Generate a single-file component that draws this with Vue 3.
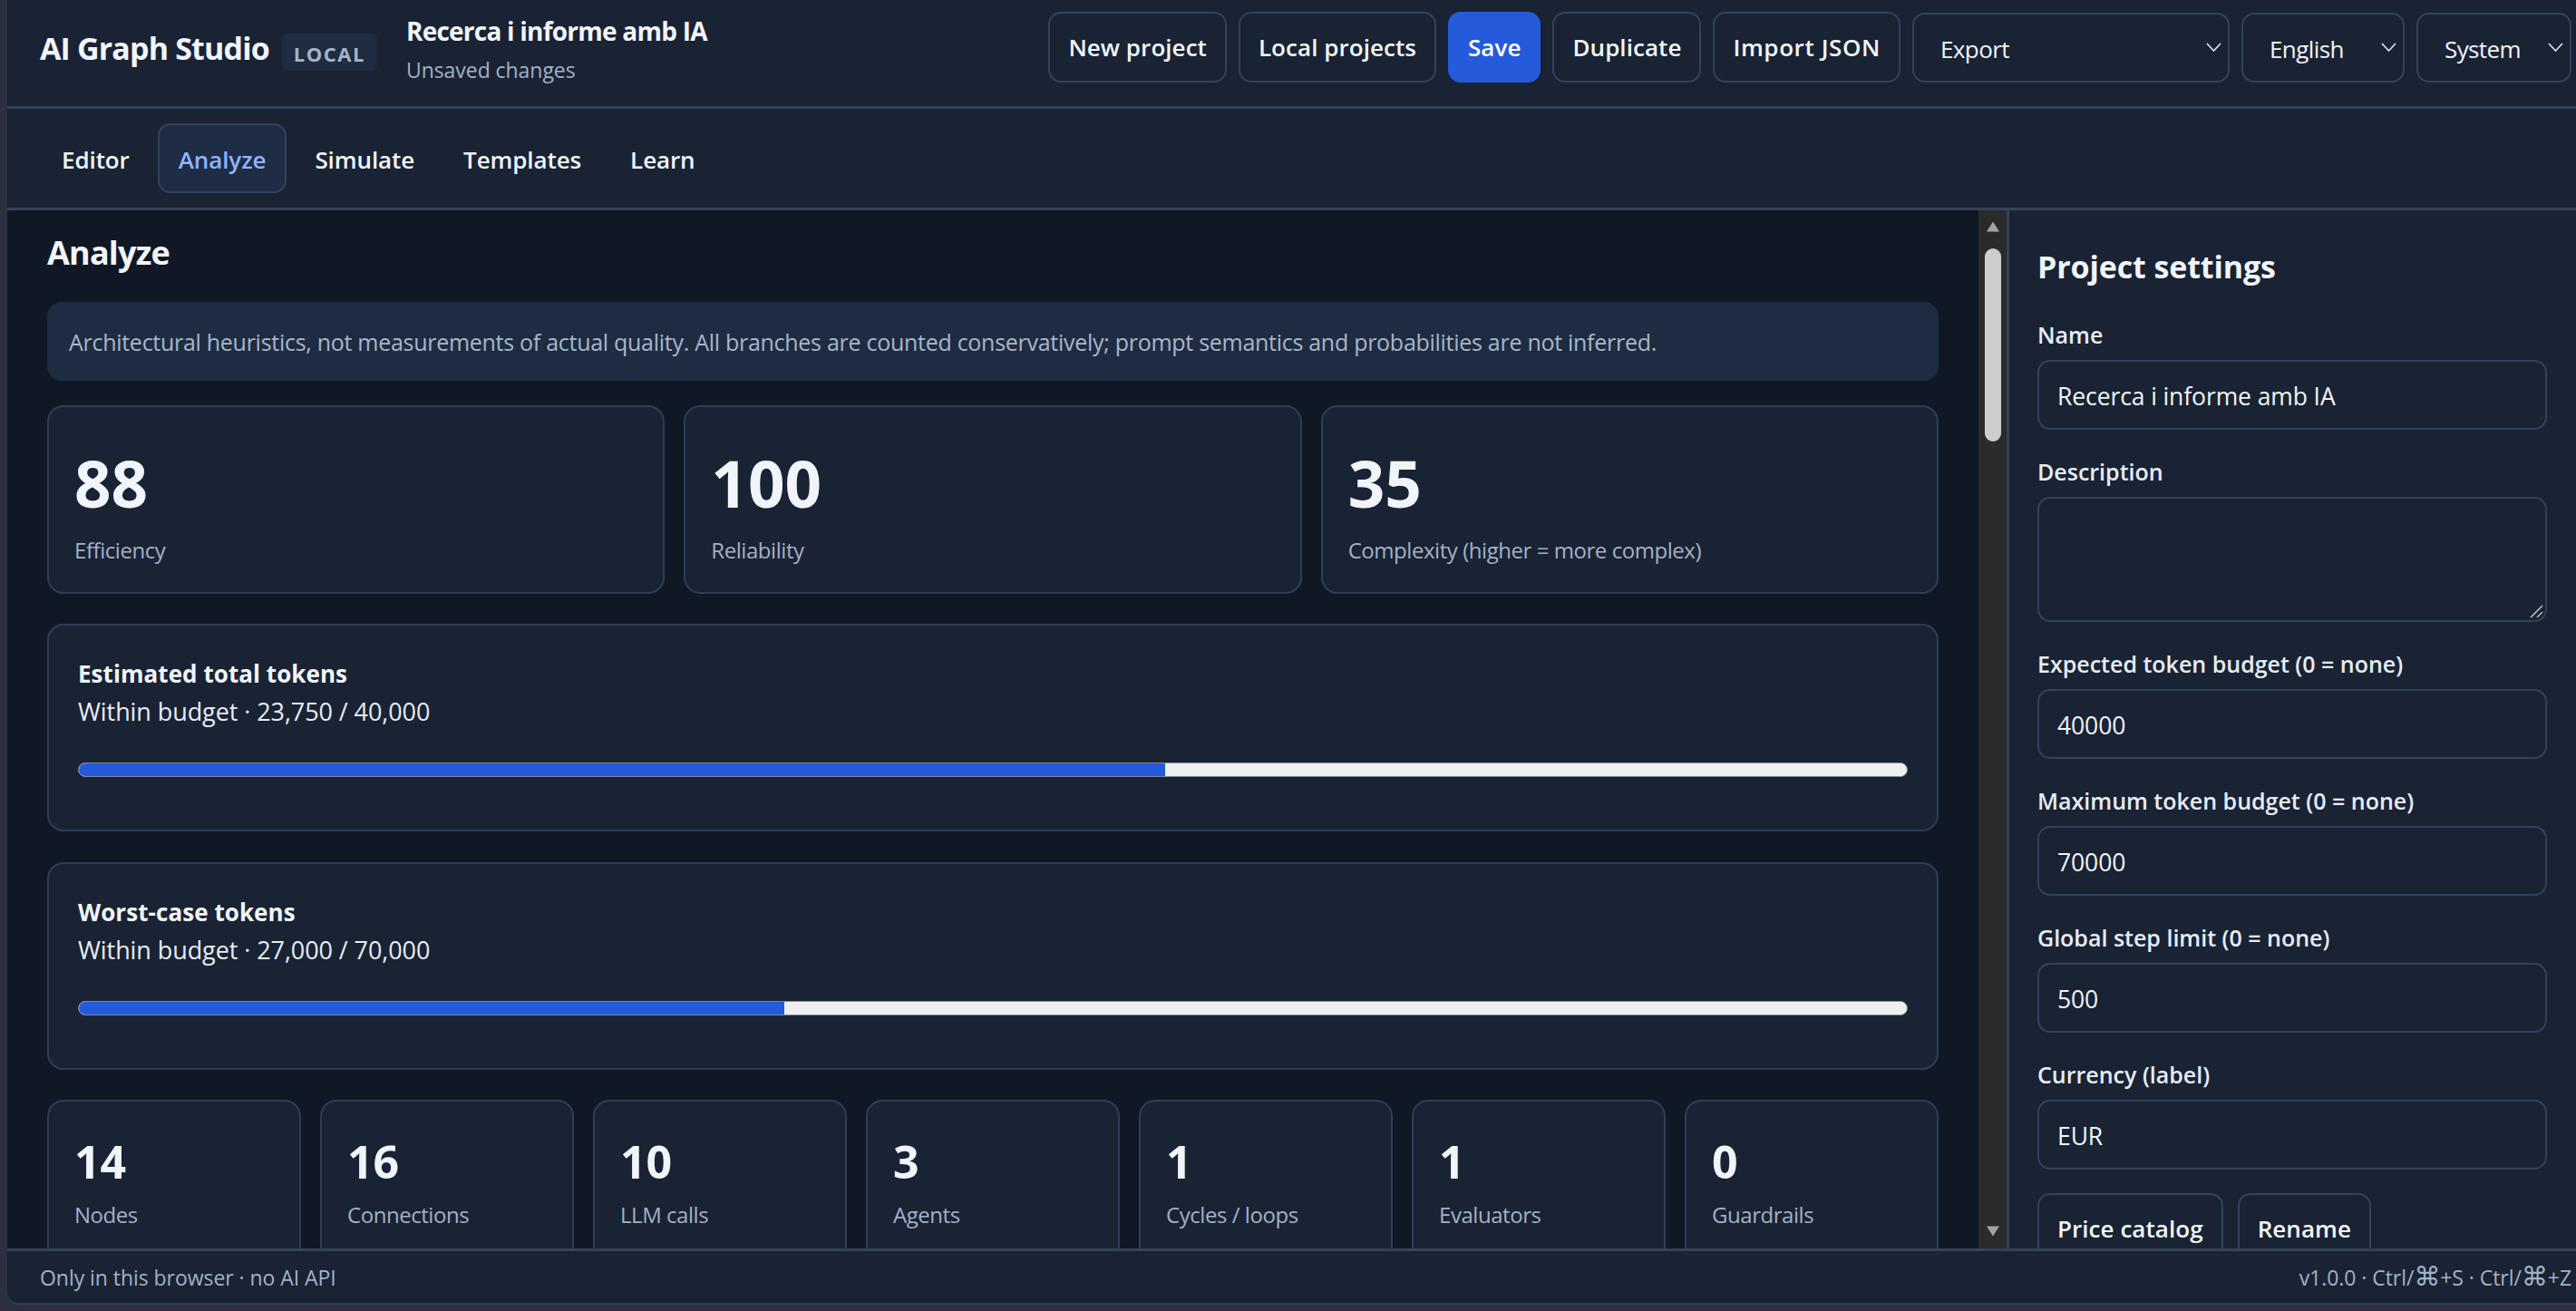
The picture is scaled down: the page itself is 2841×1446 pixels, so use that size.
<script setup>
const topActions = ['New project', 'Local projects', 'Save', 'Duplicate', 'Import JSON']
const topSelects = [
  { label: 'Export', cls: 'sel-export' },
  { label: 'English', cls: 'sel-lang' },
  { label: 'System', cls: 'sel-theme' },
]
const tabs = ['Editor', 'Analyze', 'Simulate', 'Templates', 'Learn']

const scores = [
  { value: '88', label: 'Efficiency' },
  { value: '100', label: 'Reliability' },
  { value: '35', label: 'Complexity (higher = more complex)' },
]
const budgets = [
  { title: 'Estimated total tokens', text: 'Within budget · 23,750 / 40,000', pct: 59.4 },
  { title: 'Worst-case tokens', text: 'Within budget · 27,000 / 70,000', pct: 38.6 },
]
const counts = [
  { value: '14', label: 'Nodes' },
  { value: '16', label: 'Connections' },
  { value: '10', label: 'LLM calls' },
  { value: '3', label: 'Agents' },
  { value: '1', label: 'Cycles / loops' },
  { value: '1', label: 'Evaluators' },
  { value: '0', label: 'Guardrails' },
]
const fields = [
  { label: 'Expected token budget (0 = none)', value: '40000' },
  { label: 'Maximum token budget (0 = none)', value: '70000' },
  { label: 'Global step limit (0 = none)', value: '500' },
  { label: 'Currency (label)', value: 'EUR' },
]
</script>

<template>
  <div class="shell">
    <div class="app">
      <header class="topbar">
        <div class="brand">AI Graph Studio</div>
        <span class="badge">LOCAL</span>
        <div class="project">
          <div class="project-name">Recerca i informe amb IA</div>
          <div class="project-state">Unsaved changes</div>
        </div>
        <div class="actions">
          <button
            v-for="a in topActions"
            :key="a"
            class="btn"
            :class="{ primary: a === 'Save', wide: a === 'Import JSON' }"
          >{{ a }}</button>
          <div v-for="s in topSelects" :key="s.label" class="select" :class="s.cls">
            <span>{{ s.label }}</span>
            <svg width="17" height="10" viewBox="0 0 17 10" fill="none">
              <path d="M1 1l7.5 8L16 1" stroke="#e2e8f0" stroke-width="1.6" />
            </svg>
          </div>
        </div>
      </header>

      <nav class="tabs">
        <button v-for="t in tabs" :key="t" class="tab" :class="{ active: t === 'Analyze' }">{{ t }}</button>
      </nav>

      <div class="body">
        <main class="main">
          <h2 class="title">Analyze</h2>
          <div class="notice">Architectural heuristics, not measurements of actual quality. All branches are counted conservatively; prompt semantics and probabilities are not inferred.</div>

          <div class="scores">
            <div v-for="s in scores" :key="s.label" class="card score">
              <div class="score-value">{{ s.value }}</div>
              <div class="card-label">{{ s.label }}</div>
            </div>
          </div>

          <div v-for="b in budgets" :key="b.title" class="card budget">
            <div class="budget-title">{{ b.title }}</div>
            <div class="budget-text">{{ b.text }}</div>
            <div class="bar">
              <div class="bar-fill" :style="{ width: b.pct + '%' }"></div>
            </div>
          </div>

          <div class="counts">
            <div v-for="c in counts" :key="c.label" class="card count">
              <div class="count-value">{{ c.value }}</div>
              <div class="card-label">{{ c.label }}</div>
            </div>
          </div>
        </main>

        <div class="scrollbar">
          <svg width="16" height="12" viewBox="0 0 16 12"><path d="M8 0.5l7 11H1z" fill="#a3a3a3" /></svg>
          <div class="thumb"></div>
          <div class="spacer"></div>
          <svg width="16" height="12" viewBox="0 0 16 12"><path d="M8 11.5l7-11H1z" fill="#a3a3a3" /></svg>
        </div>

        <aside class="side">
          <h3 class="side-title">Project settings</h3>
          <label class="field-label">Name</label>
          <div class="input">Recerca i informe amb IA</div>
          <label class="field-label">Description</label>
          <div class="input textarea">
            <svg class="grip" width="16" height="16" viewBox="0 0 16 16" fill="none">
              <path d="M2 15L15 2M9 15l6-6" stroke="#b8b8b8" stroke-width="1.6" />
            </svg>
          </div>
          <template v-for="f in fields" :key="f.label">
            <label class="field-label">{{ f.label }}</label>
            <div class="input">{{ f.value }}</div>
          </template>
          <div class="side-actions">
            <button class="btn">Price catalog</button>
            <button class="btn">Rename</button>
          </div>
        </aside>
      </div>

      <footer class="status">
        <span>Only in this browser · no AI API</span>
        <span>v1.0.0 · Ctrl/<span class="cmd">⌘</span>+S · Ctrl/<span class="cmd">⌘</span>+Z</span>
      </footer>
    </div>
  </div>
</template>

<style scoped>
.shell {
  width: 2841px;
  height: 1446px;
  box-sizing: border-box;
  padding: 0 0 6px 8px;
  background: #2c2f40;
  overflow: hidden;
  font-family: "Open Sans", "Noto Sans", "DejaVu Sans", sans-serif;
  color: #f1f5f9;
}
.app {
  height: 100%;
  box-sizing: border-box;
  display: flex;
  flex-direction: column;
  background: #192334;
  border-bottom: 3px solid #2d394e;
  border-bottom-left-radius: 14px;
  overflow: hidden;
}

.topbar {
  flex: none;
  height: 120px;
  box-sizing: border-box;
  display: flex;
  align-items: center;
  padding: 0 5px 0 36px;
  border-bottom: 3px solid #33425c;
}
.brand {
  font-size: 34px;
  font-weight: 700;
  letter-spacing: -0.85px;
  margin-top: -11px;
}
.badge {
  margin-left: 14px;
  padding: 0 13px;
  height: 41px;
  line-height: 44px;
  margin-top: -2px;
  font-size: 22px;
  font-weight: 700;
  letter-spacing: 1.5px;
  color: #a6b4c8;
  background: #1f2c42;
  border-radius: 6px;
}
.project {
  margin-left: 32px;
  margin-top: -10px;
}
.project-name {
  font-size: 28px;
  font-weight: 700;
  letter-spacing: -0.77px;
  line-height: 36px;
}
.project-state {
  font-size: 23px;
  line-height: 30px;
  margin-top: 10px;
  letter-spacing: -0.05px;
  color: #a3b1c6;
}
.actions {
  margin-left: auto;
  display: flex;
  align-items: flex-start;
  gap: 13px;
  margin-top: -13px;
}
.btn {
  height: 78px;
  box-sizing: border-box;
  padding: 0 20px;
  background: transparent;
  border: 2px solid #33425c;
  border-radius: 14px;
  color: #f1f5f9;
  font-family: inherit;
  font-size: 26px;
  font-weight: 600;
  letter-spacing: 0.05px;
}
.btn.wide {
  letter-spacing: 0.6px;
}
.btn.primary {
  background: #255bdb;
  border-color: #255bdb;
  color: #fff;
}
.select {
  height: 77px;
  box-sizing: border-box;
  margin-top: 1px;
  display: flex;
  align-items: center;
  justify-content: space-between;
  padding: 0 7px 2px 29px;
  border: 2px solid #33425c;
  border-radius: 14px;
  font-size: 26px;
  letter-spacing: -0.6px;
}
.select span {
  margin-top: 5px;
}
.sel-export { width: 350px; }
.sel-lang { width: 180px; }
.sel-theme { width: 171px; }

.tabs {
  flex: none;
  height: 112px;
  box-sizing: border-box;
  display: flex;
  align-items: center;
  gap: 8px;
  padding: 0 0 0 37px;
  border-bottom: 3px solid #33425c;
}
.tab {
  height: 77px;
  box-sizing: border-box;
  padding: 2px 21px 0;
  background: transparent;
  border: 2px solid transparent;
  border-radius: 14px;
  color: #f1f5f9;
  font-family: inherit;
  font-size: 26px;
  font-weight: 600;
  letter-spacing: -0.1px;
}
.tab.active {
  background: #1e2c45;
  border-color: #33425c;
  color: #8fb4fb;
}

.body {
  flex: 1;
  min-height: 0;
  display: flex;
}
.main {
  flex: 1;
  min-width: 0;
  box-sizing: border-box;
  padding: 22px 44px 0;
  background: #111825;
  overflow: hidden;
}
.title {
  margin: 0 0 29px;
  font-size: 36px;
  line-height: 50px;
  font-weight: 700;
  letter-spacing: -0.8px;
}
.notice {
  height: 87px;
  box-sizing: border-box;
  padding: 0 24px;
  display: flex;
  align-items: center;
  background: #1e2c42;
  border-radius: 16px;
  font-size: 25px;
  letter-spacing: -0.28px;
  color: #a9b6ca;
}
.card {
  box-sizing: border-box;
  background: #192334;
  border: 2px solid #2f3d55;
  border-radius: 18px;
}
.scores {
  margin-top: 27px;
  display: grid;
  grid-template-columns: repeat(3, 1fr);
  gap: 21px;
}
.score {
  height: 208px;
  padding: 44px 28px 0;
}
.score-value {
  font-size: 71px;
  line-height: 80px;
  font-weight: 700;
}
.card-label {
  margin-top: 18px;
  font-size: 24px;
  line-height: 32px;
  letter-spacing: -0.45px;
  color: #a3b1c6;
}
.budget {
  margin-top: 33px;
  height: 229px;
  padding: 35px 32px 0;
}
.budget + .budget {
  margin-top: 34px;
}
.budget-title {
  font-size: 26px;
  line-height: 36px;
  font-weight: 700;
  letter-spacing: 0.06px;
}
.budget-text {
  margin-top: 6px;
  font-size: 27px;
  line-height: 36px;
  letter-spacing: -0.08px;
  color: #e8edf4;
}
.bar {
  margin-top: 38px;
  height: 16px;
  background: #efefef;
  border: 1px solid #7f8a9a;
  box-sizing: border-box;
  border-radius: 8px;
  overflow: hidden;
}
.bar-fill {
  height: 100%;
  background: #255bdb;
}
.counts {
  margin-top: 33px;
  display: grid;
  grid-template-columns: repeat(7, 1fr);
  gap: 21px;
}
.count {
  height: 210px;
  padding: 34px 28px 0;
}
.count-value {
  font-size: 50px;
  line-height: 64px;
  font-weight: 700;
}
.count .card-label {
  margin-top: 11px;
}

.scrollbar {
  flex: none;
  width: 31px;
  display: flex;
  flex-direction: column;
  align-items: center;
  padding: 12px 0 13px;
  box-sizing: border-box;
  background: #2b2b2b;
}
.thumb {
  width: 18px;
  height: 213px;
  margin-top: 18px;
  background: #cdcdcd;
  border-radius: 9px;
}
.spacer {
  flex: 1;
}

.side {
  flex: none;
  width: 628px;
  box-sizing: border-box;
  padding: 0 32px 0 31px;
  border-left: 3px solid #33425c;
  overflow: hidden;
}
.side-title {
  margin: 37px 0 33px;
  font-size: 34px;
  line-height: 50px;
  font-weight: 700;
  letter-spacing: -0.12px;
}
.field-label {
  display: block;
  font-size: 25px;
  line-height: 34px;
  font-weight: 600;
  color: #e8edf4;
  margin-bottom: 11px;
}
.input {
  position: relative;
  height: 77px;
  box-sizing: border-box;
  display: flex;
  align-items: center;
  padding: 2px 20px 0;
  margin-bottom: 29px;
  border: 2px solid #33425c;
  border-radius: 14px;
  font-size: 26.5px;
  letter-spacing: -0.1px;
}
.textarea {
  height: 138px;
}
.grip {
  position: absolute;
  right: 2px;
  bottom: 2px;
}
.side-actions {
  display: flex;
  gap: 16px;
  margin-top: -3px;
}

.status {
  flex: none;
  height: 60px;
  box-sizing: border-box;
  display: flex;
  align-items: center;
  justify-content: space-between;
  padding: 0 5px 0 36px;
  border-top: 3px solid #33425c;
  font-size: 23px;
  letter-spacing: -0.05px;
  color: #a3b1c6;
}
.cmd {
  font-size: 29px;
  line-height: 1;
}
</style>

<style>
html, body {
  margin: 0;
  background: #2c2f40;
}
</style>
